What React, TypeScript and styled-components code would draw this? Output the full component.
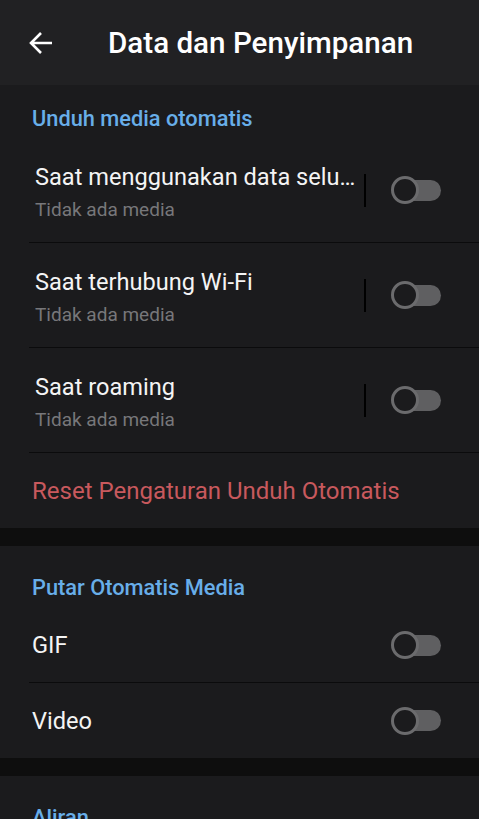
import React from "react";
import styled, { createGlobalStyle } from "styled-components";

const GlobalStyle = createGlobalStyle`
  html, body { margin: 0; padding: 0; background: #0e0e0e; }
  body { font-family: Roboto, "Noto Sans", Arial, sans-serif; -webkit-font-smoothing: antialiased; }
  * { box-sizing: border-box; }
`;

const Page = styled.div`
  width: 479px;
  height: 819px;
  overflow: hidden;
  background: #0e0e0e;
  display: flex;
  flex-direction: column;
`;

const Header = styled.header`
  height: 85px;
  flex: none;
  background: #212123;
  display: flex;
  align-items: center;
  padding-left: 29px;
`;

const BackButton = styled.button`
  width: 24px;
  height: 24px;
  padding: 0;
  border: 0;
  background: none;
  display: flex;
  align-items: center;
  justify-content: center;
  color: #ffffff;
`;

const Title = styled.h1`
  margin: 0 0 0 55px;
  font-size: 29.6px;
  line-height: 34px;
  font-weight: 500;
  color: #ffffff;
`;

const Section = styled.section`
  background: #1b1b1d;
  flex: none;
  & + & { margin-top: 18px; }
`;

const SectionTitle = styled.h2<{ $top: number; $bottom: number }>`
  margin: 0;
  padding: ${(p) => p.$top}px 0 0 32px;
  height: ${(p) => p.$top + 24 + p.$bottom}px;
  font-size: 21.8px;
  line-height: 24px;
  font-weight: 500;
  color: #68aee9;
`;

const DownloadRow = styled.div`
  margin-left: 29px;
  height: 105px;
  padding: 0 38px 0 6px;
  border-bottom: 1px solid #0b0b0c;
  display: flex;
  align-items: center;
`;

const TextCol = styled.div`
  flex: 1;
  min-width: 0;
  padding-top: 4px;
  display: flex;
  flex-direction: column;
  gap: 9px;
`;

const RowTitle = styled.div`
  font-size: 23.6px;
  line-height: 26px;
  color: #f4f4f4;
  white-space: nowrap;
  overflow: hidden;
  text-overflow: ellipsis;
`;

const RowSub = styled.div`
  font-size: 19px;
  line-height: 22px;
  color: #77777a;
`;

const Separator = styled.div`
  width: 2px;
  height: 33px;
  background: #000000;
  margin: 0 25px 0 6px;
  flex: none;
`;

const ResetRow = styled.div`
  height: 75px;
  padding-left: 32px;
  display: flex;
  align-items: center;
  font-size: 24px;
  color: #c8595d;
`;

const SimpleRow = styled.div<{ $divider?: boolean }>`
  margin-left: 29px;
  height: 75px;
  padding: 0 38px 0 3px;
  display: flex;
  align-items: center;
  justify-content: space-between;
  border-bottom: ${(p) => (p.$divider ? "1px solid #0b0b0c" : "0")};
`;

const SimpleLabel = styled.div`
  font-size: 23.6px;
  line-height: 26px;
  color: #f4f4f4;
`;

const ToggleWrap = styled.div`
  position: relative;
  width: 50px;
  height: 28px;
  flex: none;
`;

const Track = styled.div`
  position: absolute;
  left: 4px;
  right: 0;
  top: 3.5px;
  height: 21px;
  border-radius: 11px;
  background: #5f5f61;
`;

const Knob = styled.div`
  position: absolute;
  left: 0;
  top: 0;
  width: 28px;
  height: 28px;
  border-radius: 50%;
  border: 3px solid #6b6b6d;
  background: #1b1b1d;
`;

const Toggle = () => (
  <ToggleWrap>
    <Track />
    <Knob />
  </ToggleWrap>
);

const downloads = [
  { title: "Saat menggunakan data selu…", sub: "Tidak ada media" },
  { title: "Saat terhubung Wi-Fi", sub: "Tidak ada media" },
  { title: "Saat roaming", sub: "Tidak ada media" },
];

export default function App() {
  return (
    <Page>
      <GlobalStyle />
      <Header>
        <BackButton aria-label="Kembali">
          <svg width="24" height="24" viewBox="0 0 24 24" fill="none">
            <path
              d="M23 12H2.5M12 2L2 12l10 10"
              stroke="#ffffff"
              strokeWidth="2.6"
              strokeLinecap="butt"
              strokeLinejoin="miter"
            />
          </svg>
        </BackButton>
        <Title>Data dan Penyimpanan</Title>
      </Header>

      <Section>
        <SectionTitle $top={22} $bottom={7}>Unduh media otomatis</SectionTitle>
        {downloads.map((d) => (
          <DownloadRow key={d.title}>
            <TextCol>
              <RowTitle>{d.title}</RowTitle>
              <RowSub>{d.sub}</RowSub>
            </TextCol>
            <Separator />
            <Toggle />
          </DownloadRow>
        ))}
        <ResetRow>Reset Pengaturan Unduh Otomatis</ResetRow>
      </Section>

      <Section>
        <SectionTitle $top={30} $bottom={8}>Putar Otomatis Media</SectionTitle>
        <SimpleRow $divider>
          <SimpleLabel>GIF</SimpleLabel>
          <Toggle />
        </SimpleRow>
        <SimpleRow>
          <SimpleLabel>Video</SimpleLabel>
          <Toggle />
        </SimpleRow>
      </Section>

      <Section>
        <SectionTitle $top={30} $bottom={8}>Aliran</SectionTitle>
      </Section>
    </Page>
  );
}
